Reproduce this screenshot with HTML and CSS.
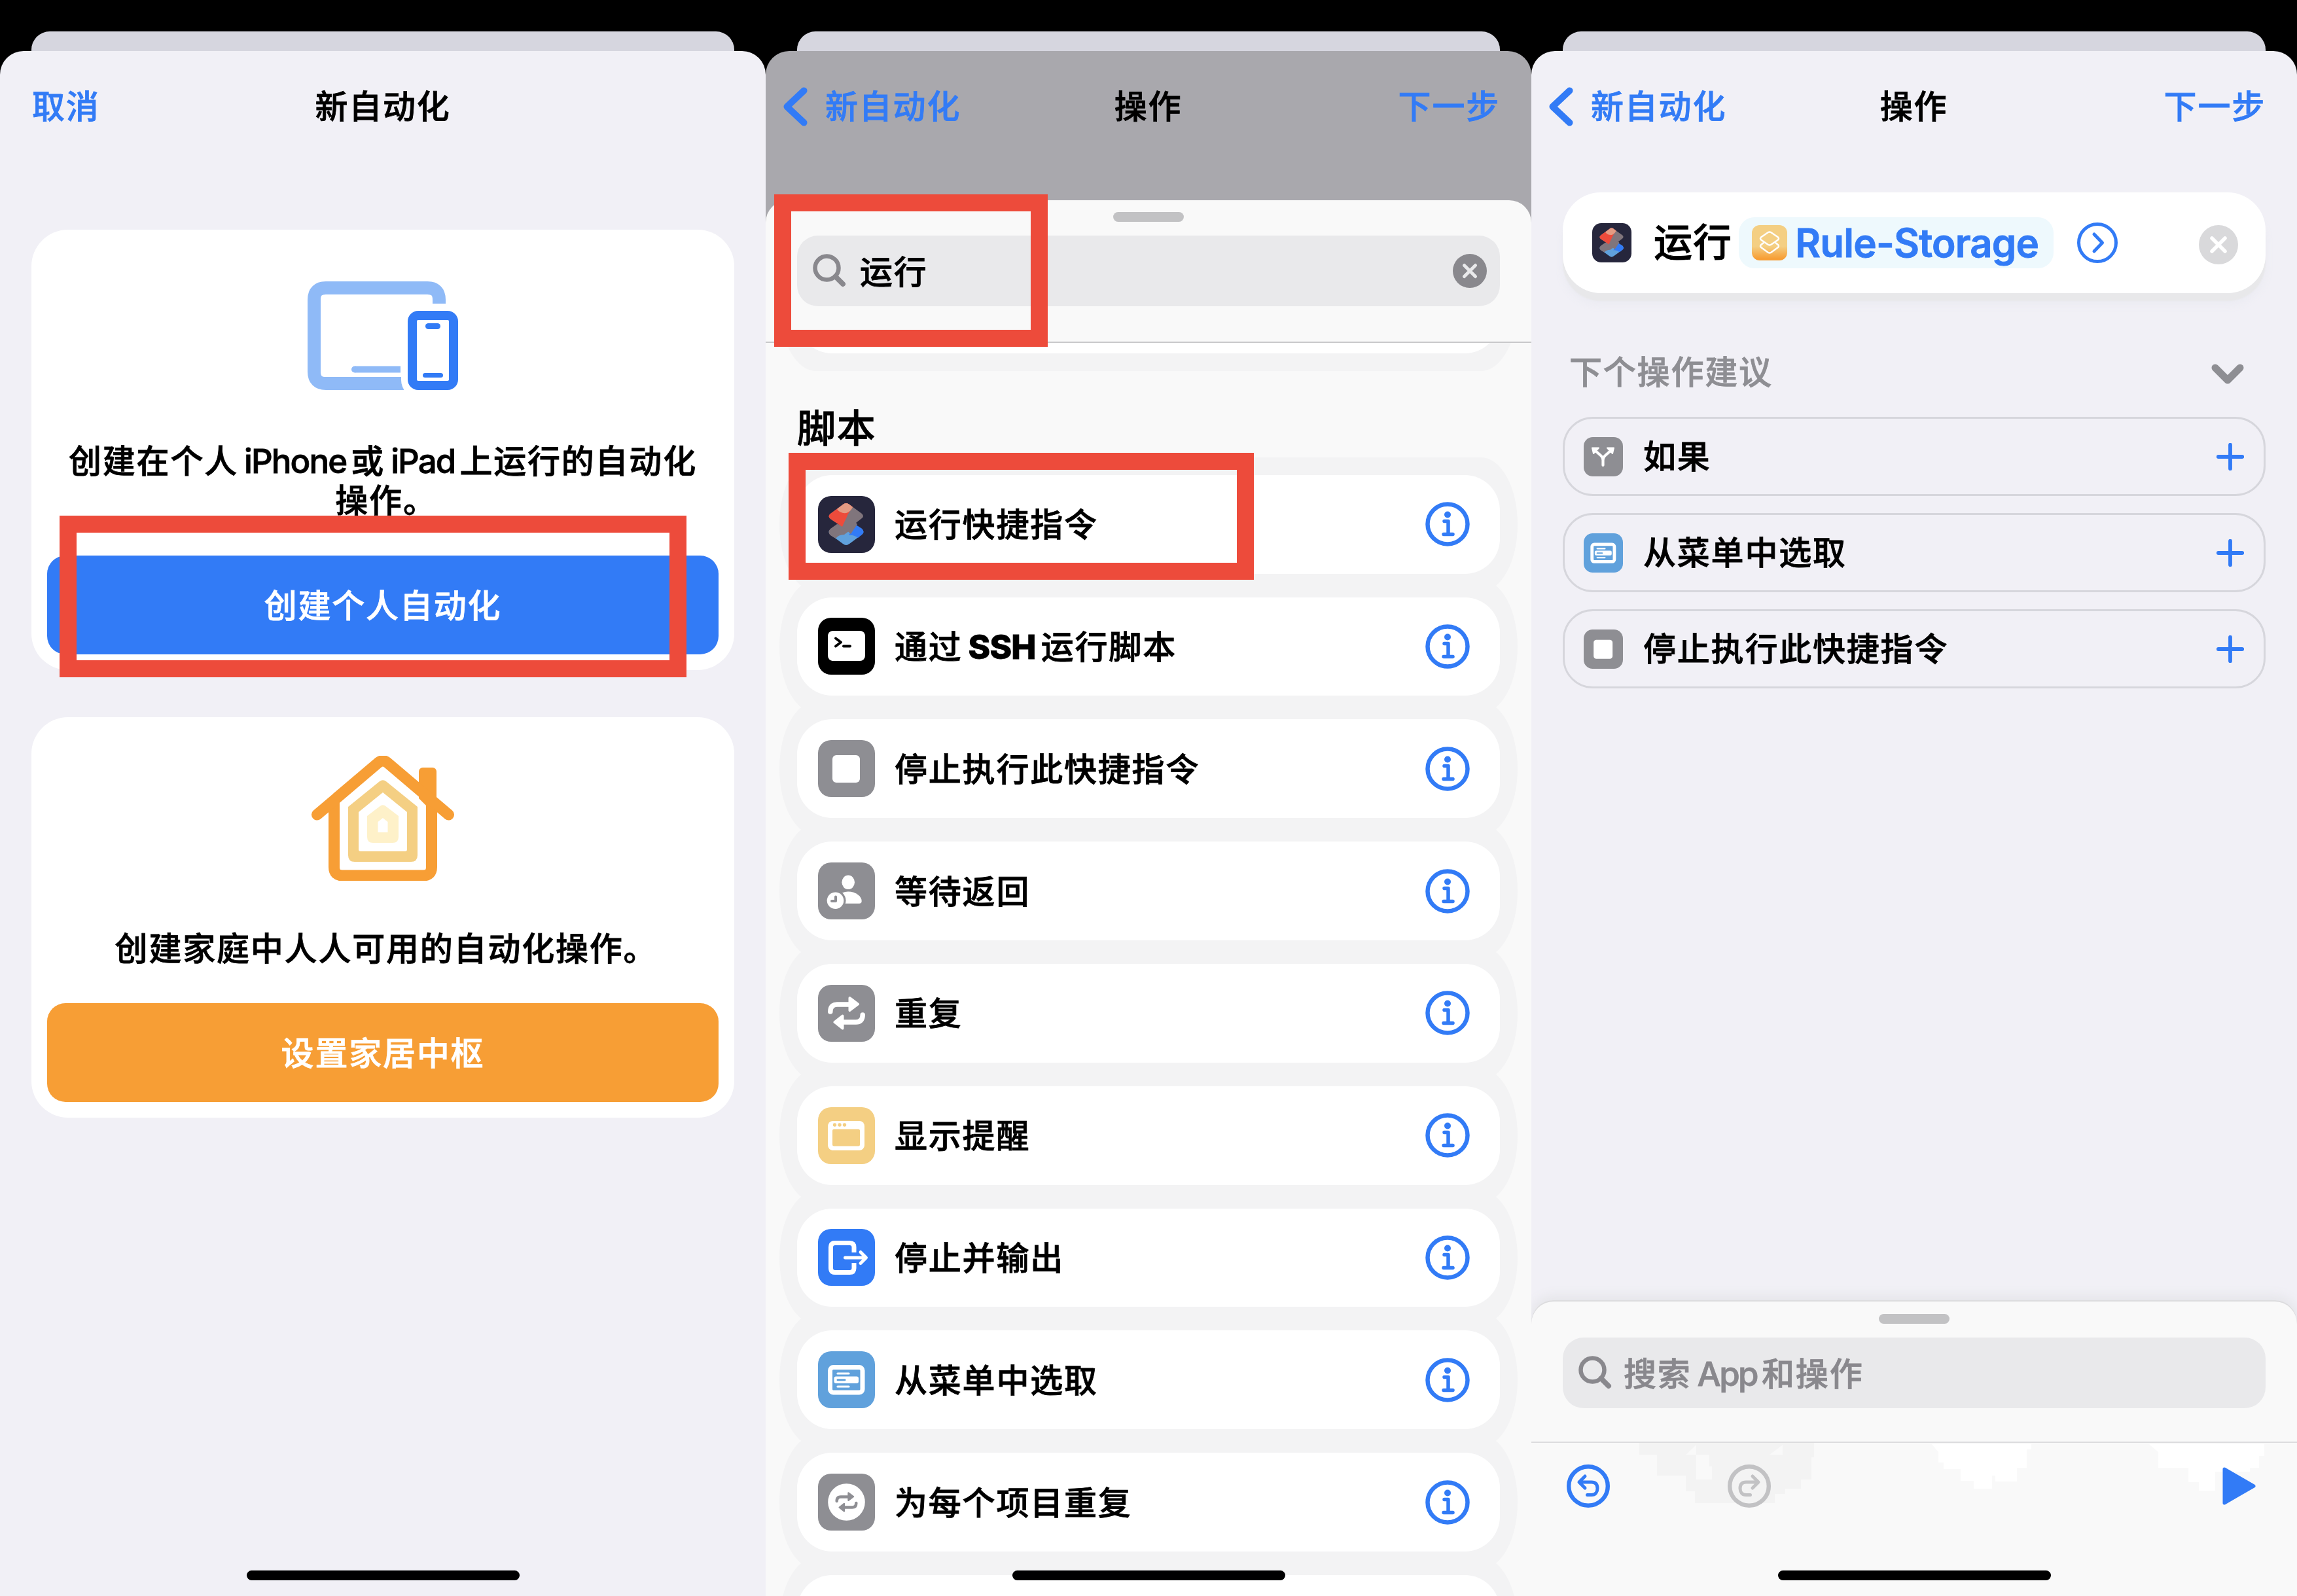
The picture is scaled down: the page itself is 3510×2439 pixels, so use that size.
FILE: index.html
```html
<!DOCTYPE html>
<html lang="zh-CN">
<head>
<meta charset="utf-8">
<title>新自动化</title>
<link rel="stylesheet" href="styles.css">
</head>
<body>
<svg class="defs" aria-hidden="true">
  <defs>
    <linearGradient id="amber" x1="0" y1="0" x2="0" y2="1">
      <stop offset="0.6" stop-color="#f4cf83"/>
      <stop offset="0.95" stop-color="#f79e35"/>
    </linearGradient>
  </defs>
  <symbol id="i-shortcuts" viewBox="0 0 87 87">
    <rect width="87" height="87" rx="20" fill="#26263c"/>
    <path d="M19 51 Q14 55 19 59 L38 73 Q43 77 48 73 L67 59 Q72 55 67 50 L56 43 Z" fill="#60a1dc"/>
    <path d="M56 43 L67 50 Q72 55 67 59 L61 64 Q54 59 47 60 Z" fill="#327bf6"/>
    <path d="M29 43 L19 50 Q14 55 19 60 L27 65 Q31 59 40 59 L58 46 Z" fill="#80757c"/>
    <path d="M38 13 Q43 9 48 13 L67 27 Q71 31 67 34 L58 41 L60 43 L50 58 L40 49 L19 35 Q14 31 19 27 Z" fill="#80757c"/>
    <path d="M19 27 L38 13 Q43 9 48 13 L53 17 Q46 26 44 32 Q40 40 37 47 L19 35 Q14 31 19 27 Z" fill="#ed4b3b"/>
    <path d="M29 20 L38 13 Q43 9 48 13 L53 17 Q49 25 43 26 Q34 27 29 20 Z" fill="#e39b83"/>
  </symbol>
  <symbol id="i-ssh" viewBox="0 0 87 87">
    <rect width="87" height="87" rx="20" fill="#000"/>
    <rect x="15" y="20" width="57" height="46" rx="8" fill="#fff"/>
    <path d="M27 31.500 L35 37.500 L27 43.500 M39 43.500 H49" fill="none" stroke="#000" stroke-width="4" stroke-linecap="round" stroke-linejoin="round"/>
  </symbol>
  <symbol id="i-stop" viewBox="0 0 87 87">
    <rect width="87" height="87" rx="20" fill="#8e8e93"/>
    <rect x="22" y="23" width="42" height="42" rx="6" fill="#fff"/>
  </symbol>
  <symbol id="i-wait" viewBox="0 0 87 87">
    <rect width="87" height="87" rx="20" fill="#8e8e93"/>
    <ellipse cx="46.200" cy="30.300" rx="9.800" ry="10.800" fill="#fff"/>
    <path d="M30 62.800 V52 Q36 44.500 46 44.500 C58 44.500 66.700 52 66.700 59 Q66.700 62.800 63 62.800 Z" fill="#fff"/>
    <circle cx="26.500" cy="58.300" r="16" fill="#8e8e93"/>
    <circle cx="26.500" cy="58.300" r="12.800" fill="#fff"/>
    <path d="M27 52.500 V59 H21" fill="none" stroke="#8e8e93" stroke-width="4" stroke-linecap="round" stroke-linejoin="round"/>
  </symbol>
  <symbol id="i-loop" viewBox="0 0 87 87">
    <path d="M18.800 41 C18.800 33 23 30 29 30 H48 M68.200 46 C68.200 54 64 57 58 57 H38" fill="none" stroke="currentColor" stroke-width="7.500" stroke-linecap="round"/>
    <path d="M48.500 20 L61 29.500 L48.500 39 Z M37.500 47.500 L25.500 57 L37.500 66.500 Z" fill="currentColor" stroke="currentColor" stroke-width="4" stroke-linejoin="round"/>
  </symbol>
  <symbol id="i-repeat" viewBox="0 0 87 87">
    <rect width="87" height="87" rx="20" fill="#8e8e93"/>
    <use href="#i-loop" color="#fff"/>
  </symbol>
  <symbol id="i-alert" viewBox="0 0 87 87">
    <rect width="87" height="87" rx="20" fill="#f4cf83"/>
    <rect x="15" y="21" width="56" height="45" rx="8" fill="#fff"/>
    <rect x="22" y="33.500" width="42" height="26" rx="2.500" fill="#f4cf83"/>
    <g fill="#f4cf83"><circle cx="25.500" cy="27" r="2.700"/><circle cx="33" cy="27" r="2.700"/><circle cx="40.500" cy="27" r="2.700"/></g>
  </symbol>
  <symbol id="i-output" viewBox="0 0 87 87">
    <rect width="87" height="87" rx="20" fill="#327bf6"/>
    <path d="M55 36 V28 Q55 21.500 48.500 21.500 H26 Q19.500 21.500 19.500 28 V60 Q19.500 66.500 26 66.500 H48.500 Q55 66.500 55 60 V52" fill="none" stroke="#fff" stroke-width="7"/>
    <path d="M41.500 44 H73 M65 35.500 L73.500 44 L65 52.500" fill="none" stroke="#fff" stroke-width="5" stroke-linecap="round" stroke-linejoin="round"/>
  </symbol>
  <symbol id="i-menu" viewBox="0 0 87 87">
    <rect width="87" height="87" rx="20" fill="#60a1dc"/>
    <rect x="18.500" y="24.500" width="49.500" height="38.500" rx="5" fill="none" stroke="#fff" stroke-width="7"/>
    <rect x="24.500" y="38.500" width="37.500" height="10.500" rx="3" fill="#fff"/>
    <path d="M30 34 H47 M30 54 H47" stroke="#fff" stroke-width="3.200" stroke-linecap="round"/>
    <path d="M30 43.800 H41" stroke="#60a1dc" stroke-width="3" stroke-linecap="round"/>
  </symbol>
  <symbol id="i-each" viewBox="0 0 87 87">
    <rect width="87" height="87" rx="20" fill="#8e8e93"/>
    <circle cx="43.500" cy="43.500" r="28.300" fill="#fff"/>
    <use href="#i-loop" color="#8e8e93" x="17.400" y="17.400" width="52.200" height="52.200"/>
  </symbol>
  <symbol id="i-branch" viewBox="0 0 60 60">
    <rect width="60" height="60" rx="14" fill="#8e8e93"/>
    <path d="M29.500 43 V35 Q29.500 31 26 28 L18 21 M29.500 35 Q29.500 31 33 28 L41 21" fill="none" stroke="#fff" stroke-width="4.200" stroke-linecap="round"/>
    <path d="M13 16.500 H23 L15 25 Z M46 16.500 H36 L44 25 Z" fill="#fff" stroke="#fff" stroke-width="2" stroke-linejoin="round"/>
  </symbol>
  <symbol id="i-layers" viewBox="0 0 54 54">
    <rect width="54" height="54" rx="12" fill="url(#amber)"/>
    <path d="M25 11 Q27 10 29 11 L40 18.500 Q42 20.500 40 22.500 L29 30 Q27 31 25 30 L14 22.500 Q12 20.500 14 18.500 Z M18 27 L14 30 Q12 32 14 34 L25 42 Q27 43 29 42 L40 34 Q42 32 40 30 L36 27" fill="none" stroke="#fff" stroke-width="2.400" stroke-linejoin="round"/>
  </symbol>
  <symbol id="i-info" viewBox="0 0 68 68">
    <circle cx="34" cy="34" r="30.500" fill="none" stroke="#327bf6" stroke-width="6.500"/>
    <circle cx="34" cy="19.500" r="5" fill="#327bf6"/>
    <path d="M29 29.500 H35 V49 M28 49.500 H42" fill="none" stroke="#327bf6" stroke-width="5.500" stroke-linecap="round" stroke-linejoin="round"/>
  </symbol>
  <symbol id="i-search" viewBox="0 0 52 52">
    <circle cx="21.500" cy="21.500" r="18" fill="none" stroke="#89888d" stroke-width="6.500"/>
    <path d="M34.500 34.500 L46 46" stroke="#89888d" stroke-width="8" stroke-linecap="round"/>
  </symbol>
  <symbol id="i-back" viewBox="0 0 38 60">
    <path d="M31.500 5.500 L5.500 30 L31.500 54.500" fill="none" stroke="#327bf6" stroke-width="10" stroke-linecap="round" stroke-linejoin="round"/>
  </symbol>
  <symbol id="i-plus" viewBox="0 0 42 42">
    <path d="M21 2.700 V39.300 M2.700 21 H39.300" stroke="#327bf6" stroke-width="5.800" stroke-linecap="round"/>
  </symbol>
  <symbol id="i-undo" viewBox="0 0 66 66">
    <circle cx="33" cy="33" r="29.800" fill="none" stroke="currentColor" stroke-width="6.400"/>
    <path d="M28 18 L19 27 L28 36 M20 27 H38 C45.500 27 47 32 47 36.500 C47 42 44 46.500 38 46.500 H31.500" fill="none" stroke="currentColor" stroke-width="5" stroke-linecap="round" stroke-linejoin="round"/>
  </symbol>
</svg>

<section class="phone">
  <div class="back-sheet"></div>
  <div class="sheet">
    <header class="nav"><span class="link">取消</span><h1>新自动化</h1><span></span></header>
    <div class="choices">
      <article class="choice choice-personal">
        <svg class="art-devices" viewBox="0 0 230 166">
          <path d="M201 34 V28 Q201 10 183 10 H28 Q10 10 10 28 V138 Q10 156 28 156 H147" fill="none" stroke="#8fbaf7" stroke-width="20"/>
          <path d="M72 134.500 H142" stroke="#8fbaf7" stroke-width="10"/><circle cx="72" cy="134.500" r="5" fill="#8fbaf7"/>
          <rect x="143" y="34" width="98" height="143" rx="26" fill="#fff"/>
          <rect x="160" y="52" width="63" height="107" rx="9" fill="#fff" stroke="#327bf6" stroke-width="14"/>
          <rect x="180" y="64" width="23" height="9" rx="4.500" fill="#327bf6"/>
          <rect x="176" y="140" width="31" height="7" rx="3.500" fill="#327bf6"/>
        </svg>
        <p>创建在个人<span class="latin">iPhone</span>或<span class="latin">iPad</span>上运行的自动化<br><span class="tail">操作。</span></p>
        <div class="button blue">创建个人自动化</div>
      </article>
      <article class="choice choice-home">
        <svg class="art-house" viewBox="0 0 218 191">
          <rect x="164" y="18" width="27" height="80" rx="6" fill="#f79e35"/>
          <path d="M109 10 L43 76 V175 H175 V76 Z" fill="#fff"/>
          <path d="M34.500 72 V170 Q34.500 183 47.500 183 H170.500 Q183.500 183 183.500 170 V72" fill="none" stroke="#f79e35" stroke-width="17"/>
          <path d="M8.500 90 L102 10.500 Q109 5 116 10.500 L209.500 90" fill="none" stroke="#f79e35" stroke-width="17" stroke-linecap="round"/>
          <path d="M103.500 39.500 Q109 35 114.500 39.500 L162 78 V152 Q162 162 152 162 H66 Q56 162 56 152 V78 Z" fill="#f4cf83"/>
          <path d="M109 56 L146 86 V143 Q146 146 143 146 H75 Q72 146 72 143 V86 Z" fill="#fff"/>
          <path d="M104 77.500 Q109 73 114 77.500 L133 92 V124 Q133 133 124 133 H94 Q85 133 85 124 V92 Z" fill="#fef1c9"/>
          <path d="M109 95 L116.500 101 V117 H101.500 V101 Z" fill="#fff"/>
        </svg>
        <p class="tail">创建家庭中人人可用的自动化操作。</p>
        <div class="button orange">设置家居中枢</div>
      </article>
    </div>
  </div>
  <div class="mark mark-create"></div>
  <div class="home-bar"></div>
</section>

<section class="phone">
  <div class="back-sheet"></div>
  <div class="sheet dimmed">
    <header class="nav with-back"><span class="link back"><svg><use href="#i-back"/></svg>新自动化</span><h1>操作</h1><span class="link end">下一步</span></header>
    <div class="drawer picker">
      <div class="drawer-head">
        <div class="grabber"></div>
        <div class="search"><svg class="glass"><use href="#i-search"/></svg><span>运行</span>
          <svg class="clear" viewBox="0 0 52 52"><circle cx="26" cy="26" r="26" fill="#89888d"/><path d="M17.500 17.500 L34.500 34.500 M34.500 17.500 L17.500 34.500" stroke="#e9e9eb" stroke-width="5" stroke-linecap="round"/></svg>
        </div>
      </div>
      <div class="results">
        <div class="action peek"></div>
        <h2>脚本</h2>
        <div class="actions">
          <div class="action"><svg class="tile"><use href="#i-shortcuts"/></svg><span>运行快捷指令</span><svg class="info"><use href="#i-info"/></svg></div>
          <div class="action"><svg class="tile"><use href="#i-ssh"/></svg><span>通过<span class="latin heavy">SSH</span>运行脚本</span><svg class="info"><use href="#i-info"/></svg></div>
          <div class="action"><svg class="tile"><use href="#i-stop"/></svg><span>停止执行此快捷指令</span><svg class="info"><use href="#i-info"/></svg></div>
          <div class="action"><svg class="tile"><use href="#i-wait"/></svg><span>等待返回</span><svg class="info"><use href="#i-info"/></svg></div>
          <div class="action"><svg class="tile"><use href="#i-repeat"/></svg><span>重复</span><svg class="info"><use href="#i-info"/></svg></div>
          <div class="action"><svg class="tile"><use href="#i-alert"/></svg><span>显示提醒</span><svg class="info"><use href="#i-info"/></svg></div>
          <div class="action"><svg class="tile"><use href="#i-output"/></svg><span>停止并输出</span><svg class="info"><use href="#i-info"/></svg></div>
          <div class="action"><svg class="tile"><use href="#i-menu"/></svg><span>从菜单中选取</span><svg class="info"><use href="#i-info"/></svg></div>
          <div class="action"><svg class="tile"><use href="#i-each"/></svg><span>为每个项目重复</span><svg class="info"><use href="#i-info"/></svg></div>
          <div class="action"></div>
        </div>
      </div>
    </div>
  </div>
  <div class="mark mark-search"></div>
  <div class="mark mark-run"></div>
  <div class="home-bar"></div>
</section>

<section class="phone">
  <div class="back-sheet"></div>
  <div class="sheet">
    <header class="nav with-back"><span class="link back"><svg><use href="#i-back"/></svg>新自动化</span><h1>操作</h1><span class="link end">下一步</span></header>
    <div class="step">
      <svg class="small-tile"><use href="#i-shortcuts"/></svg>
      <span class="verb">运行</span>
      <span class="token"><svg><use href="#i-layers"/></svg>Rule-Storage</span>
      <svg class="expand" viewBox="0 0 62 62"><circle cx="31" cy="31" r="28.500" fill="none" stroke="#327bf6" stroke-width="5"/><path d="M26 18 L38.500 31 L26 44" fill="none" stroke="#327bf6" stroke-width="5" stroke-linecap="round" stroke-linejoin="round"/></svg>
      <svg class="remove" viewBox="0 0 60 60"><circle cx="30" cy="30" r="30" fill="#d9d9db"/><path d="M20 20 L40 40 M40 20 L20 40" stroke="#fff" stroke-width="5.500" stroke-linecap="round"/></svg>
    </div>
    <div class="suggest-head"><span>下个操作建议</span><svg viewBox="0 0 50 32"><path d="M6 6 L25 25 L44 6" fill="none" stroke="#8e8e93" stroke-width="11" stroke-linecap="round" stroke-linejoin="round"/></svg></div>
    <div class="suggestions">
      <div class="suggestion"><svg class="small-tile"><use href="#i-branch"/></svg><span>如果</span><svg class="plus"><use href="#i-plus"/></svg></div>
      <div class="suggestion"><svg class="small-tile"><use href="#i-menu"/></svg><span>从菜单中选取</span><svg class="plus"><use href="#i-plus"/></svg></div>
      <div class="suggestion"><svg class="small-tile"><use href="#i-stop"/></svg><span>停止执行此快捷指令</span><svg class="plus"><use href="#i-plus"/></svg></div>
    </div>
    <div class="drawer dock">
      <div class="drawer-head">
        <div class="grabber"></div>
        <div class="search placeholder"><svg class="glass"><use href="#i-search"/></svg><span>搜索<span class="latin">App</span>和操作</span></div>
      </div>
      <div class="toolbar">
        <svg class="smudges" viewBox="0 0 1170 100" aria-hidden="true">
          <path d="M165 0 H432 V22 H428 V56 H412 V70 H388 V78 H372 V92 H250 V74 H236 V50 H192 V18 H165 Z" fill="#f3f3f3"/>
          <path d="M252 18 H272 V36 H276 V56 H252 Z M364 18 L384 3 V18 Z M236 18 L252 3 V18 Z" fill="#f9f9f9"/>
          <path d="M612 2 H764 V10 H757 V38 H742 V59 H709 V50 H704 V70 H676 V58 H656 V40 H630 V30 H622 V14 Z" fill="#fff"/>
          <path d="M944 2 H1120 V20 H1112 V38 H1098 V44 H1045 V73 H1020 V60 H1004 V38 H958 V14 Z" fill="#fff"/>
        </svg>
        <svg class="undo"><use href="#i-undo"/></svg>
        <svg class="redo"><use href="#i-undo"/></svg>
        <svg class="play" viewBox="0 0 52 58"><path d="M3 3 V55 L48 29 Z" fill="#327bf6" stroke="#327bf6" stroke-width="5" stroke-linejoin="round"/></svg>
      </div>
    </div>
  </div>
  <div class="home-bar"></div>
</section>
</body>
</html>
```
FILE: styles.css
```css
* { box-sizing: border-box; }
body {
  margin: 0;
  display: flex;
  width: 3510px;
  height: 2439px;
  overflow: hidden;
  background: #000;
  color: #000;
  font-family: "Inter", "Noto Sans CJK SC", sans-serif;
  font-size: 50px;
  font-weight: 500;
  letter-spacing: 1.8px;
  line-height: 60px;
  -webkit-text-stroke: 0.8px currentColor;
}
h1, h2, p { margin: 0; font-size: inherit; font-weight: inherit; }
svg { display: block; flex: none; }
.defs { position: absolute; width: 0; height: 0; }
.latin { margin: 0 7px 0 9px; font-size: 51px; letter-spacing: -1.9px; }
.heavy { margin-right: 8px; font-weight: 800; letter-spacing: -0.8px; }
.tail { margin-left: 10px; }

.phone {
  position: relative;
  display: flex;
  flex-direction: column;
  width: 1170px;
  height: 2439px;
  padding-top: 48px;
  overflow: hidden;
}
.back-sheet {
  flex: none;
  height: 30px;
  margin: 0 48px;
  border-radius: 28px 28px 0 0;
  background: #d6d6df;
}
.sheet {
  flex: 1;
  min-height: 0;
  display: flex;
  flex-direction: column;
  overflow: hidden;
  border-radius: 36px 36px 0 0;
  background: #f1f0f6;
}
.dimmed { background: #a9a8ad; }

.nav {
  flex: none;
  display: grid;
  grid-template-columns: 1fr auto 1fr;
  align-items: center;
  height: 168px;
  padding: 2px 49px 0;
}
.nav.with-back { padding: 2px 48px 0 27px; }
.nav.with-back h1 { position: relative; left: 10px; }
.link { color: #327bf6; }
.back { display: flex; align-items: center; gap: 26px; }
.back svg { width: 38px; height: 60px; }
.end { text-align: right; }

.choices { display: flex; flex-direction: column; gap: 72px; margin: 105px 48px 0; }
.choice {
  display: flex;
  flex-direction: column;
  align-items: center;
  padding: 0 24px 24px;
  border-radius: 56px;
  background: #fff;
  text-align: center;
  white-space: nowrap;
}
.choice-personal { height: 673px; padding-top: 79px; }
.choice-home { height: 612px; padding-top: 59px; }
.art-devices { width: 230px; height: 166px; margin-bottom: 79px; }
.art-house { width: 218px; height: 191px; margin-bottom: 74px; }
.button {
  display: flex;
  align-items: center;
  justify-content: center;
  align-self: stretch;
  height: 151px;
  margin-top: auto;
  padding-top: 2px;
  border-radius: 28px;
  color: #fff;
}
.blue { background: #327bf6; }
.orange { background: #f79e35; }

.drawer {
  display: flex;
  flex-direction: column;
  border-radius: 34px 34px 0 0;
  background: #f9f9f9;
}
.picker { flex: 1; min-height: 0; margin-top: 60px; overflow: hidden; }
.drawer-head {
  flex: none;
  display: flex;
  flex-direction: column;
  align-items: center;
  gap: 21px;
  padding: 18px 48px 54px;
  border-bottom: 2px solid #c8c8ca;
}
.grabber { width: 108px; height: 15px; border-radius: 8px; background: #c2c2c4; }
.search {
  display: flex;
  align-items: center;
  align-self: stretch;
  height: 108px;
  padding: 0 20px 0 24px;
  border-radius: 32px;
  background: #e9e9eb;
}
.search span { flex: none; }
.search > span { margin-left: 20px; padding-top: 3px; }
.glass { width: 52px; height: 52px; }
.clear { width: 52px; height: 52px; margin-left: auto; }
.placeholder { color: #89888d; }
.search.placeholder > span { margin-left: 17px; }
.placeholder .latin { letter-spacing: -2.6px; }

.results { flex: 1; min-height: 0; overflow: hidden; isolation: isolate; padding: 0 48px; }
.peek { margin-top: -135px; }
.results h2 { margin: 80px 0 36px; font-size: 59px; line-height: 70px; }
.actions { display: flex; flex-direction: column; gap: 36px; }
.action {
  position: relative;
  flex: none;
  display: flex;
  align-items: center;
  height: 150.8px;
  padding: 0 46px 0 32px;
  border-radius: 54px;
  background: #fff;
}
.action::before {
  content: "";
  position: absolute;
  z-index: -1;
  inset: -27px;
  border-radius: 56px / 102px;
  background: #f3f3f4;
}
.action > span { margin-left: 30px; padding-top: 2px; }
.tile { width: 87px; height: 87px; }
.info { width: 68px; height: 68px; margin-left: auto; }

.step {
  flex: none;
  display: flex;
  align-items: center;
  height: 154px;
  margin: 48px 48px 0;
  padding: 0 42px 0 45px;
  border-radius: 58px;
  background: #fff;
  box-shadow: 0 12px 2px #e8e8ea, 0 18px 14px #ebebf2;
  font-size: 59px;
}
.small-tile { width: 60px; height: 60px; }
.verb { margin-left: 34px; letter-spacing: 1px; }
.token {
  display: flex;
  align-items: center;
  gap: 12px;
  width: 481px;
  height: 78px;
  margin-left: 10px;
  padding-left: 20px;
  border-radius: 24px;
  background: #eef9fd;
  color: #327bf6;
  font-size: 60px;
  font-weight: 600;
  letter-spacing: -0.8px;
  white-space: nowrap;
}
.token svg { width: 54px; height: 54px; }
.expand { width: 62px; height: 62px; margin-left: 36px; }
.remove { width: 60px; height: 60px; margin-left: auto; position: relative; top: 3px; }

.suggest-head {
  flex: none;
  display: flex;
  align-items: center;
  justify-content: space-between;
  height: 60px;
  margin: 91px 81px 38px 58px;
  color: #8e8e93;
}
.suggest-head svg { width: 50px; height: 32px; margin-top: 6px; }
.suggestions { display: flex; flex-direction: column; gap: 26px; margin: 0 48px; }
.suggestion {
  flex: none;
  display: flex;
  align-items: center;
  height: 121px;
  padding: 0 30px 0 29px;
  border: 3px solid #d6d6dc;
  border-radius: 46px;
}
.suggestion span { margin-left: 31px; padding-top: 1px; }
.plus { width: 42px; height: 42px; margin-left: auto; }

.dock { height: 450px; margin-top: auto; box-shadow: 0 -2px 0 #dcdcde, 0 -6px 16px 4px #e6e6ea; }
.dock .drawer-head { padding-top: 19px; padding-bottom: 51px; border-color: #dcdcde; }
.toolbar { position: relative; display: flex; align-items: center; height: 132px; padding: 0 62px 0 54px; }
.smudges { position: absolute; left: 0; top: 0; width: 1170px; height: 100px; }
.undo, .redo, .play { position: relative; }
.undo { width: 66px; height: 66px; color: #327bf6; }
.redo { width: 66px; height: 66px; margin-left: 180px; color: #c2c2c4; transform: scaleX(-1); }
.play { width: 52px; height: 58px; margin-left: auto; }

.home-bar {
  position: absolute;
  left: 377px;
  bottom: 24px;
  width: 417px;
  height: 15px;
  border-radius: 8px;
  background: #000;
}
.mark { position: absolute; border: 26px solid #ed4b3b; }
.mark-create { left: 91px; top: 788px; width: 958px; height: 247px; }
.mark-search { left: 13px; top: 297px; width: 418px; height: 233px; }
.mark-run { left: 35px; top: 692px; width: 711px; height: 194px; }
```
